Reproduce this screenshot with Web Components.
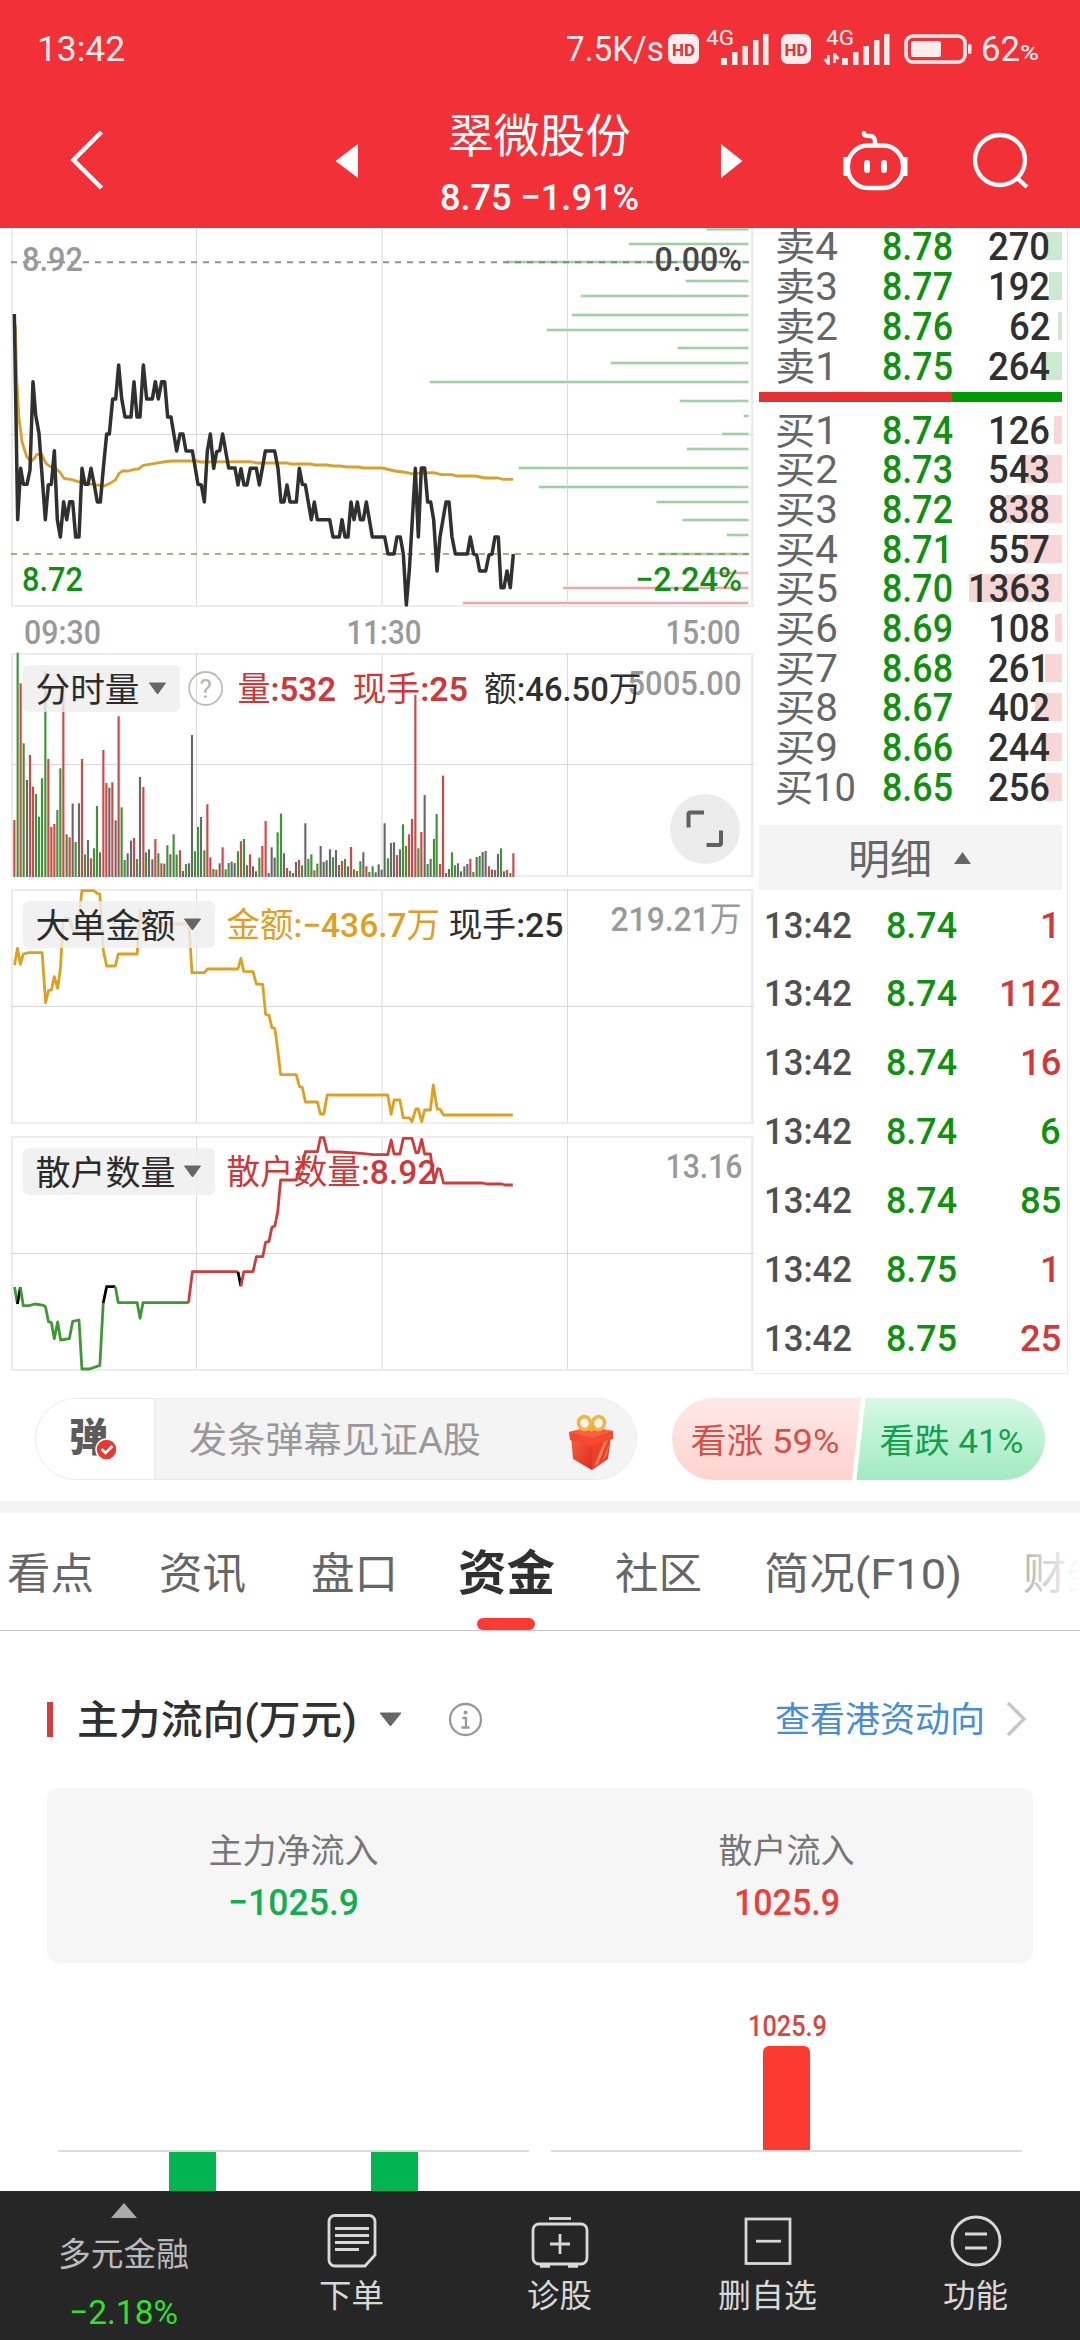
<!DOCTYPE html>
<html lang="zh-CN">
<head>
<meta charset="utf-8">
<title>翠微股份</title>
<style>
body{margin:0;width:1080px;height:2340px;overflow:hidden;background:#fff;font-family:Roboto,"Noto Sans CJK SC",sans-serif;line-height:1;color:#333}
</style>
</head>
<body>
<stock-page></stock-page>
<script>
const sheet = ':host{display:block;box-sizing:border-box}*{box-sizing:border-box}svg{display:block;flex:none}';
function define(name, css, html) {
  customElements.define(name, class extends HTMLElement {
    connectedCallback() {
      if (this.shadowRoot) return;
      this.attachShadow({mode: 'open'}).innerHTML = '<style>' + sheet + css + '</style>' + (typeof html === 'function' ? html(this) : html);
    }
  });
}

/* Text condensed or widened to an exact advance width. */
customElements.define('fit-text', class extends HTMLElement {
  connectedCallback() {
    if (this.shadowRoot) return;
    const w = +this.getAttribute('w');
    this.attachShadow({mode: 'open'}).innerHTML = '<style>:host{display:block;flex:none;width:' + w + 'px;line-height:1;white-space:pre}span{display:inline-block;vertical-align:top;transform-origin:0 50%}</style><span><slot></slot></span>';
    const s = this.shadowRoot.querySelector('span');
    s.style.transform = 'scaleX(' + w / s.getBoundingClientRect().width + ')';
  }
});

define('status-bar', ':host{display:flex;align-items:center;height:97px;color:#ffecec;padding-left:37px}svg{margin-left:2px}', `
<fit-text w="88" style="font-size:35px;margin-top:2px">13:42</fit-text>
<fit-text w="98" style="font-size:35px;margin-left:441px;margin-top:2px">7.5K/s</fit-text>
<svg width="312" height="44" viewBox="665 26 312 44" fill="#ffecec" font-family="Roboto,sans-serif">
<rect x="667" y="33" width="31" height="30" rx="7"/><text x="671" y="54.500" font-size="17" font-weight="800" fill="#d83a40" textLength="23" lengthAdjust="spacingAndGlyphs">HD</text>
<text x="705" y="44" font-size="20" textLength="28" lengthAdjust="spacingAndGlyphs">4G</text>
<path d="M720 57h6v7h-6zM731 51h5.500v13h-5.500zM741.500 45h5.500v19h-5.500zM752 39h5.500v25h-5.500zM762 33h5.500v31h-5.500z"/>
<rect x="780" y="33" width="30" height="30" rx="7"/><text x="783.500" y="54.500" font-size="17" font-weight="800" fill="#d83a40" textLength="23" lengthAdjust="spacingAndGlyphs">HD</text>
<text x="825" y="44" font-size="20" textLength="28" lengthAdjust="spacingAndGlyphs">4G</text>
<path d="M827.500 64V54M828 63l-4.500-5M833.500 52v10M833 53l4.500 5" stroke="#ffecec" stroke-width="2.800"/>
<path d="M841 57h6v7h-6zM852 51h5.500v13h-5.500zM862.500 45h5.500v19h-5.500zM873 39h5.500v25h-5.500zM883 33h5.500v31h-5.500z"/>
<rect x="905" y="35" width="59" height="26" rx="7" fill="none" stroke="#ffecec" stroke-width="3.500"/><rect x="910" y="40" width="30" height="16" rx="2"/><rect x="967" y="43" width="3.500" height="10" rx="1.500"/></svg>
<fit-text w="39" style="font-size:35px;margin-left:3px;margin-top:2px">62</fit-text><fit-text w="19" style="font-size:21px;font-weight:500;margin-top:9px">%</fit-text>`);

define('stock-nav', ':host{display:flex;height:131px;color:#fff}.t{width:200px;margin:16px 0 0 80px;display:flex;flex-direction:column;align-items:center;gap:20px}', `
<svg width="120" height="131" viewBox="0 97 120 131"><path d="M101.500 132L73.500 160L101.500 188" fill="none" stroke="#fff" stroke-width="4.500"/></svg>
<svg width="240" height="131" viewBox="120 97 240 131"><path d="M358 144v34l-22.500-17z" fill="#fff"/></svg>
<div class="t" style="margin-left:79px"><fit-text w="183" style="font-size:46px">翠微股份</fit-text><fit-text w="199" style="font-size:37px;font-weight:500">8.75 −1.91%</fit-text></div>
<svg width="441" height="131" viewBox="639 97 441 131" fill="none" stroke="#fff" stroke-width="4.300"><path d="M721 144v34l21.500-17z" fill="#fff" stroke="none"/>
<rect x="848" y="145.500" width="55" height="42.500" rx="20"/><path d="M846 157v19M905 157v19" stroke-width="5"/><path d="M875 145q1-9-5-9q-7 0-6-3" stroke-linecap="round"/><path d="M867 163v7M884 163v7" stroke-width="6" stroke-linecap="round"/>
<circle cx="1000" cy="160" r="25"/><path d="M1017 178l10 9"/></svg>`);

const fmtText = (x1, x2, y, size, color, text, weight = 400) =>
  `<text x="${x1 - 1.5}" y="${y}" font-size="${size}" fill="${color}" font-weight="${weight}" textLength="${x2 - x1 + 3}" lengthAdjust="spacingAndGlyphs" xml:space="preserve">${text}</text>`;
const frame = (top, mid, bottom) => `<g fill="#ececec"><rect x="11" y="${top}" width="743" height="2"/><rect x="11" y="${bottom}" width="743" height="2"/><rect x="11" y="${top}" width="2" height="${bottom - top + 1}"/><rect x="381" y="${top}" width="2" height="${bottom - top}"/><rect x="751" y="${top}" width="2.500" height="${bottom - top + 1}"/></g><g fill="#d9d9d9"><rect x="196" y="${top}" width="1" height="${bottom - top}"/><rect x="567" y="${top}" width="1" height="${bottom - top}"/><rect x="11" y="${mid}" width="743" height="1"/></g>`;
const chip = (y, w, text, tw) => `<rect x="23" y="${y}" width="${w}" height="47" rx="6" fill="#eee" fill-opacity=".82"/>${fmtText(37, 37 + tw, y + 37, 34.5, '#2b2b2b', text)}<path d="M${23 + w - 30.5} ${y + 18}h16l-8 11z" fill="#666" stroke="#666" stroke-linejoin="round"/>`;

define('price-chart', '', () => {
  const green = [[1011,13],[777,57],[408,111],[948,168],[633,213],[606,270],[531,315],[924,369],[723,414],[180,471],[930,528],[1122,573],[1056,627],[951,672],[447,729],[507,786],[860,831],[939,885],[1071,930],[865,987]];
  const red = [[1020,1044],[580,1089],[279,1134]];
  const bars = (list, c, halo) => list.map(([x, y]) => `<rect x="${x + 1108}" y="${y - 6}" width="${1138 - x}" height="12" fill="${halo}"/><rect x="${x + 1110}" y="${y - 3}" width="${1135 - x}" height="6" fill="${c}"/>`).join('');
  return `<svg width="754" height="424" viewBox="0 228 754 424">${frame(220, 434, 605)}
<g transform="translate(0 225) scale(.33333)">${bars(green, '#a3cfa5', '#dff2df')}${bars(red, '#e3acae', '#fae3e3')}
<path d="M33 112H2247" stroke="#777" stroke-opacity=".8" stroke-width="6" stroke-dasharray="18 18"/><path d="M33 987H2247" stroke="#8a7a3c" stroke-opacity=".65" stroke-width="6" stroke-dasharray="18 18"/>
<g fill="none" stroke-linejoin="round"><polyline stroke="#d9a02c" stroke-width="8.500" points="46,300 50,460 57,580 66,650 80,695 93,710 103,700 110,689 124,687 138,715 150,724 165,728 180,742 192,760 215,764 238,771 262,776 312,783 330,775 347,764 357,746 367,738 385,738 403,733 415,732 430,721 460,716 490,711 515,708 590,708 603,711 750,710 770,714 860,714 872,717 930,717 945,720 980,720 1000,723 1020,723 1040,726 1075,726 1090,729 1146,729 1160,732 1185,738 1210,741 1235,746 1300,743 1325,749 1355,749 1370,753 1425,753 1455,759 1495,759 1510,763 1539,763"/>
<polyline stroke="#303030" stroke-width="10.500" points="43,267 53,884 62,730 70,778 81,778 90,735 99,470 107,570 117,625 126,750 136,884 145,780 154,778 163,677 172,884 181,936 191,830 200,884 209,830 218,830 227,936 237,936 246,730 255,778 264,778 273,730 283,780 292,831 301,831 310,730 320,627 328,627 338,522 347,522 356,420 365,520 375,576 393,576 402,470 411,576 420,576 430,420 440,522 457,522 466,470 475,522 485,470 494,470 503,576 513,576 521,625 530,678 540,627 549,627 558,678 577,678 586,730 594,778 604,780 613,831 622,678 631,627 641,730 650,680 659,677 668,627 686,729 705,729 714,780 723,731 732,780 741,780 751,730 769,730 778,780 787,730 796,678 824,678 834,730 843,831 852,831 861,780 870,831 889,831 898,730 907,778 916,780 934,884 943,831 952,884 989,884 999,936 1018,936 1026,884 1035,936 1044,936 1053,831 1062,884 1072,831 1081,884 1090,884 1099,831 1117,936 1154,936 1164,987 1182,987 1191,936 1201,936 1210,987 1219,1140 1228,1035 1237,884 1246,730 1255,936 1264,729 1274,729 1283,831 1292,831 1301,884 1311,1038 1320,936 1338,831 1347,831 1356,936 1366,987 1402,987 1411,936 1421,987 1430,990 1439,1038 1457,1038 1467,990 1476,987 1485,936 1495,936 1503,1088 1512,1088 1521,1038 1531,1088 1540,987"/></g></g>
${fmtText(23.5, 81.5, 270.7, 34, '#999', '8.92', 500)}${fmtText(23.5, 81.5, 591, 34, '#109010', '8.72', 500)}${fmtText(656, 740.5, 270.7, 34, '#484848', '0.00%', 500)}${fmtText(636.5, 740.5, 591, 34, '#109010', '−2.24%', 500)}
${fmtText(25.5, 99.5, 643.6, 34, '#999', '09:30', 500)}${fmtText(348, 420, 643.6, 34, '#999', '11:30', 500)}${fmtText(667, 739, 643.6, 34, '#999', '15:00', 500)}</svg>`;
});

define('volume-chart', '', () => {
  const left = '43:540r,53:38g,62:130r,71:310g,81:420k,90:345r,99:440r,108:462g,117:530g,126:415g,136:95g,145:357r,154:561r,163:552r,172:510g,181:385g,190:112r,200:583g,209:592r,218:491k,227:606g,237:490k,246:357r,255:643g,264:600k,273:655r,282:625g,291:498g,300:637k,310:330r,319:429r,328:443k,337:427r,347:541k,356:229r,365:502g,374:660g,383:640k,393:602k,402:594r,411:657g,420:411k,430:441r,438:637g,447:628k,457:658k,466:597r,475:640g,484:670r,493:671k,502:616g,511:643k,521:583g,530:644g,540:631r,549:693k,558:672g,567:670k,576:285k,585:634g,594:561g,603:531k,613:631g,622:493r,631:652r,640:687g,649:689r,659:670k,668:622r,677:688g,686:669g,695:665k,704:669k,714:634g,723:604r,732:597g,741:676k,750:643r,759:679k,768:694k,778:653g,787:618r,797:543r,806:699k,815:622k,824:653k,833:577g,843:521g,852:640k,861:684r,870:693g,879:699k,888:666k,897:660r,906:676g,916:550k,925:657g,934:643g,943:691r,952:671g,962:618k,971:666k,980:661k,990:628k,999:652g,1008:630k,1017:675k,1026:663r,1035:657g,1044:679k,1053:621r,1062:688g,1071:693r,1081:664g,1090:637k,1099:679r,1108:696g,1118:679g,1127:697k,1136:673k,1145:689k,1154:550k,1164:655g,1173:609k,1182:607k,1191:645r,1200:628k,1209:553g,1218:618g,1227:583r,1236:537r,1246:165r,1255:625g,1264:576r,1274:465k,1283:672g,1292:657k,1302:597g,1310:522g,1320:672r,1329:407r,1338:699r,1347:687k,1356:637g,1365:676g,1374:670k,1383:694k,1393:679k,1402:672k,1411:657r,1420:696g,1430:651k,1439:648g,1448:636k,1457:633k,1467:679r,1476:689k,1485:690r,1494:642k,1503:625g,1512:694k,1521:690r,1531:699g,1540:640r';
  const color = {r: '#c94c4c', g: '#43923b', k: '#686868'}, halo = {r: '#ffdcdc', g: '#dcf3d8', k: '#eee'};
  const cells = left.split(',').map(s => s.match(/(\d+):(\d+)(.)/).slice(1));
  const bars = cells.map(([x, y, c]) => `<rect x="${x - 5}" y="${y}" width="10" height="${711 - y}" fill="${halo[c]}"/>`).join('') + cells.map(([x, y, c]) => `<rect x="${x - 3}" y="${y}" width="6" height="${711 - y}" fill="${color[c]}"/>`).join('');
  return `<svg width="754" height="228" viewBox="0 652 754 228">${frame(653, 764, 875)}<g transform="translate(0 640) scale(.33333)">${bars}</g>
${chip(665, 157, '分时量', 101)}<circle cx="205.700" cy="688.500" r="16.500" stroke-width="1.800" fill="none" stroke="#bdbdbd"/><text x="205.700" y="698" font-size="26" fill="#b5b5b5" text-anchor="middle">?</text>
${fmtText(629, 740, 694.7, 34, '#999', '5005.00', 500)}${fmtText(239, 334.5, 701, 34, '#cf3838', '量<tspan font-weight="600">:532</tspan>')}${fmtText(354, 466.5, 701, 34, '#cf3838', '现手<tspan font-weight="600">:25</tspan>')}${fmtText(485.5, 640, 701, 34, '#2f2f2f', '额<tspan font-weight="500">:46.50</tspan>万')}
<circle cx="705" cy="829" r="35" fill="#ececec"/><path d="M688.500 827.500V814a1.500 1.500 0 0 1 1.500-1.500H704M706.500 845H719.500a1.500 1.500 0 0 0 1.500-1.500V830.500" fill="none" stroke="#606060" stroke-width="4"/></svg>`;
});

define('order-flow-chart', '', `<svg width="754" height="251" viewBox="0 880 754 251">${frame(889, 1006, 1122)}
<g transform="translate(0 880) scale(.4847 .33333)" fill="none" stroke-linejoin="round"><polyline stroke="#dfa01f" stroke-width="2.800" vector-effect="non-scaling-stroke" points="30,255 36,205 42,253 48,222 60,218 87,218 94,368 100,332 106,330 112,290 119,325 125,260 130,120 137,115 144,115 150,150 160,152 169,32 194,32 200,40 206,42 213,210 220,258 238,258 244,222 283,222 289,90 295,132 390,132 396,278 422,278 428,267 491,267 497,235 503,274 522,275 529,312 542,313 548,403 555,406 561,443 567,445 573,510 579,584 611,584 618,620 624,623 630,666 655,666 661,702 668,702 675,645 800,645 807,703 813,660 825,660 832,713 845,714 850,725 858,687 863,687 870,725 876,690 888,690 894,615 902,687 908,688 915,705 1058,705"/></g>
${chip(901, 192, '大单金额', 137)}${fmtText(228, 438.5, 937, 34, '#dfa01f', '金额<tspan font-weight="500">:−436.7</tspan>万')}${fmtText(450, 562, 937, 34, '#2f2f2f', '现手<tspan font-weight="500">:25</tspan>')}${fmtText(612, 740, 930.7, 34, '#999', '<tspan font-weight="500">219.21</tspan>万')}</svg>`);

define('retail-chart', '', () => {
  const line = (c, p) => `<polyline stroke="${c}" points="${p}" vector-effect="non-scaling-stroke"/>`;
  return `<svg width="754" height="243" viewBox="0 1131 754 243">${frame(1136, 1253, 1369)}
<g transform="translate(0 880) scale(.4847 .33333)" fill="none" stroke-width="2.800" stroke-linejoin="round">
${line('#3d9933', '30,1221 36,1272')}${line('#000', '36,1272 42,1222')}${line('#3d9933', '42,1222 48,1277 60,1277 72,1272 90,1276 94,1281 100,1325 106,1328 112,1376 119,1326 125,1380 143,1376 150,1324 163,1320 169,1467 185,1467 206,1456 213,1269')}${line('#000', '213,1269 220,1220 238,1220')}${line('#3d9933', '238,1220 244,1268 283,1268 289,1315 295,1268 389,1268')}${line('#cf3c3c', '389,1268 397,1175 491,1175')}${line('#000', '491,1175 497,1219')}${line('#cf3c3c', '497,1219 503,1175 522,1175 529,1130 542,1130 548,1087 555,1084 561,1042 567,1038 573,995 579,900 611,900 618,865 624,855 630,815 655,815 661,773 668,773 675,815 700,816 745,820 770,824 800,824 807,780 813,822 825,822 832,775 850,775 858,818 863,818 870,778 876,822 888,822 896,905 903,866 908,868 915,909 995,909 1005,912 1035,912 1042,915 1058,915')}</g>
${chip(1148, 192, '散户数量', 137)}${fmtText(228, 435, 1184, 34, '#cf3838', '散户数量<tspan font-weight="500">:8.92</tspan>')}${fmtText(667, 741, 1178, 34, '#999', '13.16', 500)}</svg>`;
});

define('book-row', ':host{display:grid;grid-template-columns:107px 1fr auto;align-items:center;padding:2px 17px 0 21px;position:relative;font-size:38px;color:#666}.bar{position:absolute;right:5px;height:28px;top:6px}.p{font-weight:500;color:#0e920e}.q{font-weight:500;color:#303030;position:relative}', el => {
  const [label, price, qty, bar] = el.getAttribute('data').split(' ');
  return `<div class="bar" style="width:${bar}px;background:${label[0] === '卖' ? '#cdeacf' : '#f9d6d6'}"></div><fit-text w="${label.length > 2 ? 81 : 63}">${label}</fit-text><fit-text class="p" w="71">${price}</fit-text><fit-text class="q" w="${qty.length * 20.5 + .5}">${qty}</fit-text>`;
});
define('trade-row', ':host{display:grid;grid-template-columns:122px 1fr auto;align-items:center;height:68.9px;padding:1px 6px 0 10px;font-size:37.5px;font-weight:500;color:#505050}.p{color:#0e920e}', el => {
  const [price, qty, color] = el.getAttribute('data').split(' ');
  return `<fit-text w="88">13:42</fit-text><fit-text class="p" w="71">${price}</fit-text><fit-text w="${qty.length * 20.7}" style="color:${color === 'r' ? '#d23a3a' : '#0e920e'}">${qty}</fit-text>`;
});
const bookRows = (list, h) => list.map(d => `<book-row data="${d}" style="height:${h}px"></book-row>`).join('');
define('order-book', ':host{width:314px;height:1146px;border-right:1px solid #e8e8e8;border-bottom:1px solid #e8e8e8}.list{margin-top:-2px}.split{display:flex;height:10px;margin:6px 5px 7.500px;background:#009a00}.split i{width:193px;background:#e53032}.head{display:flex;align-items:center;height:65px;margin:19px 5px 0;background:#f4f4f4;color:#666;padding-left:89px;gap:22px}', `
<div class="list">${bookRows(['卖4 8.78 270 17','卖3 8.77 192 13','卖2 8.76 62 4','卖1 8.75 264 17'], 40)}</div>
<div class="split"><i></i></div>
${bookRows(['买1 8.74 126 8','买2 8.73 543 38','买3 8.72 838 57','买4 8.71 557 38','买5 8.70 1363 93','买6 8.69 108 7','买7 8.68 261 17','买8 8.67 402 27','买9 8.66 244 16','买10 8.65 256 17'], 39.7)}
<div class="head"><fit-text w="84" style="font-size:41px;margin-top:6px">明细</fit-text><svg width="17" height="12"><path d="M0 12L8.500 0L17 12z" fill="#666"/></svg></div>
${['8.74 1 r','8.74 112 r','8.74 16 r','8.74 6 g','8.74 85 g','8.75 1 r','8.75 25 r'].map(d => `<trade-row data="${d}"></trade-row>`).join('')}`);

define('comment-bar', ':host{display:flex;height:127px;padding:24px 35px 0 35px}.pill{display:flex;width:602px;height:82px;border:1px solid #e9e9e9;border-radius:41px;overflow:hidden}.logo{width:119px;background:#fff;border-right:1px solid #e9e9e9}.in{display:flex;align-items:center;background:#f4f4f4;color:#999;padding-left:34px;flex:1}', `
<div class="pill"><div class="logo"><svg width="118" height="80" viewBox="36 1399 118 80"><text x="69" y="1451" font-size="39" font-weight="900" fill="#5c5c5c" font-family="Noto Sans CJK SC,sans-serif">弹</text><circle cx="106.500" cy="1449.500" r="10.500" fill="#e63b30" stroke="#fff" stroke-width="1.500"/><path d="M101.500 1449l4 4l7-7" fill="none" stroke="#fff" stroke-width="2.500"/></svg></div>
<div class="in"><fit-text w="292" style="font-size:36px;margin-top:4px">发条弹幕见证A股</fit-text>
<svg style="margin:6px 0 0 86px" width="50" height="57" viewBox="0 0 50 57"><defs><linearGradient id="l" x2="1" y2="1"><stop stop-color="#fb6044"/><stop offset="1" stop-color="#d92c1c"/></linearGradient></defs><path d="M4 22l21 8v26L6 45z" fill="url(#l)"/><path d="M25 30l19-8-3 23-16 11z" fill="#e8422c"/><path d="M2 18l21-5 23 4v8l-21 7L3 26z" fill="#f4482f"/><path d="M2 18l21-5 23 4-21 7z" fill="#f9603f"/><path d="M37 28l4-2-10 24-4 2zM42 30l-2 10-4 6z" fill="#ff7d54"/><g fill="none" stroke="#f0b545" stroke-width="3.500"><ellipse cx="17.500" cy="9" rx="6" ry="6.500" transform="rotate(-15 17.500 9)"/><ellipse cx="31.500" cy="9" rx="6" ry="6.500" transform="rotate(15 31.500 9)"/></g><circle cx="24.500" cy="14.500" r="3" fill="#f3ab36"/></svg></div></div>
<svg style="margin-left:35px" width="373" height="82" viewBox="672 0 373 82" font-size="34"><defs><linearGradient id="r" x2="0" y2="1"><stop stop-color="#fee9e8"/><stop offset="1" stop-color="#fdd4cf"/></linearGradient><linearGradient id="g" x2="0" y2="1"><stop stop-color="#d9f9e6"/><stop offset="1" stop-color="#a0ebc0"/></linearGradient></defs>
<path d="M713 0H861L852 82H713a41 41 0 0 1 0-82z" fill="url(#r)"/><path d="M865.500 0H1004a41 41 0 0 1 0 82H856.500z" fill="url(#g)"/>
${fmtText(692, 838, 54.5, 34, '#d94f47', '看涨 59%')}${fmtText(881, 1022, 54.5, 34, '#10a04e', '看跌 41%')}</svg>`);

define('tab-bar', ':host{display:flex;position:relative;height:130px;border-top:12px solid #f4f4f4;border-bottom:1px solid #c8c8c8;font-size:43px;color:#666;padding-left:7px;overflow:hidden}fit-text{margin-top:40px}.on{margin-top:37px;font-size:48px;font-weight:700;color:#303030}i{position:absolute;left:477px;bottom:0;width:58px;height:12px;border-radius:6px;background:#fb3a33}.f{position:absolute;right:0;top:0;width:90px;height:117px;background:linear-gradient(90deg,rgba(255,255,255,.25),#fff)}', `
<fit-text w="87">看点</fit-text><fit-text w="87" style="margin-left:65px">资讯</fit-text><fit-text w="87" style="margin-left:65px">盘口</fit-text><fit-text class="on" w="97" style="margin-left:60px">资金</fit-text><fit-text w="87" style="margin-left:60px">社区</fit-text><fit-text w="198" style="margin-left:62px">简况(F10)</fit-text><fit-text w="87" style="margin-left:61px">财务</fit-text><div class="f"></div><i></i>`);

define('fund-header', ':host{display:flex;align-items:center;height:70px;margin-top:53px;padding-left:47px}', `
<svg width="6" height="35"><rect width="6" height="35" fill="#d63c3c"/></svg><fit-text w="280" style="font-size:40px;font-weight:500;color:#303030;margin:3px 0 0 24px">主力流向(万元)</fit-text>
<svg style="margin-left:20px" width="107" height="40" viewBox="377 1698 107 40"><path d="M380 1712h21l-10.500 13z" fill="#666" stroke="#666" stroke-linejoin="round"/><g fill="none" stroke="#999" stroke-width="2.300"><circle cx="465.500" cy="1718.500" r="15.500"/><path d="M462.500 1717h3.500v9.500M461.500 1726.500h8"/></g><circle cx="465.500" cy="1711.500" r="2" fill="#999"/></svg>
<fit-text w="210" style="font-size:35px;color:#468dd8;margin:2px 0 0 291px">查看港资动向</fit-text>
<svg style="margin-left:20px" width="24" height="36"><path d="M3 2l16 16L3 34" fill="none" stroke="#c6c6c6" stroke-width="3.500"/></svg>`);

define('fund-summary', ':host{display:grid;grid-template-columns:1fr 1fr;height:175px;margin:34px 47px 0;border-radius:12px;background:#f6f6f6}div{display:flex;flex-direction:column;align-items:center;padding-top:46px;gap:16px;font-size:34px;color:#777}b{font-weight:500;font-size:37px}', `
<div><fit-text w="170">主力净流入</fit-text><b style="color:#12ae50"><fit-text w="131">−1025.9</fit-text></b></div><div><fit-text w="136">散户流入</fit-text><b style="color:#ec3f37"><fit-text w="106">1025.9</fit-text></b></div>`);

define('fund-bars', '', `<svg width="1080" height="228" viewBox="0 1963 1080 228"><path d="M58 2151H529M551 2151H1022" stroke="#dcdcdc" stroke-width="2"/><path d="M169 2152h47v40h-47zM371 2152h47v40h-47z" fill="#02b550"/><path d="M763 2150V2052a6 6 0 0 1 6-6H804a6 6 0 0 1 6 6V2150z" fill="#fb3a31"/>${fmtText(749.5, 825.5, 2035.5, 29, '#d8463e', '1025.9', 500)}</svg>`);

define('nav-item', ':host{display:flex;flex-direction:column;align-items:center;width:208.500px;padding-top:19px;gap:10px;font-size:32px;color:#d8d8d8}', el => `<slot></slot><fit-text w="${el.getAttribute('w')}">${el.getAttribute('label')}</fit-text>`);
define('bottom-nav', ':host{display:flex;height:149px;background:#262626}.s{width:248px;display:flex;flex-direction:column;align-items:center;padding-top:12px;color:#bbb;font-size:33px}svg{fill:none;stroke:#d8d8d8;stroke-width:2.800}', `
<div class="s"><svg width="26" height="15" style="fill:#aaa;stroke:none"><path d="M0 15L13 0L26 15z"/></svg><fit-text w="131" style="margin-top:20px">多元金融</fit-text><fit-text w="109" style="font-size:34px;color:#2fe02f;margin-top:24px">−2.18%</fit-text></div>
<nav-item w="65" label="下单"><svg width="60" height="60" viewBox="322 2210 60 60"><path d="M335 2215.500h34a6 6 0 0 1 6 6V2255l-10 11H335a6 6 0 0 1-6-6V2221.500a6 6 0 0 1 6-6zM335 2228.500h34M335 2235.500h34M335 2242.500h34M335 2249.500h24"/></svg></nav-item>
<nav-item w="65" label="诊股"><svg width="60" height="60" viewBox="530 2210 60 60"><path d="M549 2218.500h22"/><rect x="533" y="2224" width="54" height="40" rx="6"/><path d="M560 2234v20M550 2244h20"/><path d="M540 2266h10M568 2266h10" stroke-width="3.500"/></svg></nav-item>
<nav-item w="99" label="删自选"><svg width="60" height="60" viewBox="738 2210 60 60"><rect x="746" y="2219" width="44" height="44.500"/><path d="M756 2241.200h25"/></svg></nav-item>
<nav-item w="65" label="功能"><svg width="60" height="60" viewBox="946 2210 60 60"><circle cx="976" cy="2241" r="24"/><path d="M965 2234h22M965 2248h22"/></svg></nav-item>`);

define('stock-page', 'header{height:228px;background:#f23037;position:relative;z-index:1}main{display:flex;height:1146px}', `
<header><status-bar></status-bar><stock-nav></stock-nav></header>
<main><div><price-chart></price-chart><volume-chart></volume-chart><order-flow-chart></order-flow-chart><retail-chart></retail-chart></div><order-book></order-book></main>
<comment-bar></comment-bar><tab-bar></tab-bar>
<fund-header></fund-header><fund-summary></fund-summary><fund-bars></fund-bars>
<bottom-nav></bottom-nav>`);
</script>
</body>
</html>
